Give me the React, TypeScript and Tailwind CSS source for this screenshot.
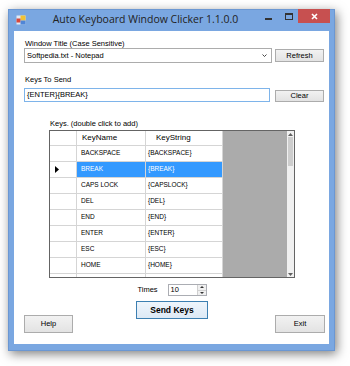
import React from "react";

const rows: [string, string][] = [
  ["BACKSPACE", "{BACKSPACE}"],
  ["BREAK", "{BREAK}"],
  ["CAPS LOCK", "{CAPSLOCK}"],
  ["DEL", "{DEL}"],
  ["END", "{END}"],
  ["ENTER", "{ENTER}"],
  ["ESC", "{ESC}"],
  ["HOME", "{HOME}"],
  ["", ""],
];

const font = { fontFamily: '"Liberation Sans", Arial, sans-serif' };

function WinButton({ label, className = "" }: { label: string; className?: string }) {
  return (
    <div
      className={`flex items-center justify-center border border-[#acacac] bg-gradient-to-b from-[#f2f2f2] to-[#e3e3e3] text-[7.5px] leading-none text-black ${className}`}
    >
      {label}
    </div>
  );
}

function AppIcon() {
  return (
    <svg width="10" height="10" viewBox="0 0 10 10">
      <rect x="0.5" y="0.5" width="9" height="9" fill="#dfe9f6" />
      <rect x="4.5" y="0.5" width="5" height="5" fill="#f2c233" />
      <rect x="0.5" y="3.5" width="4" height="4" fill="#d9473b" />
      <rect x="4.5" y="5.5" width="5" height="4" fill="#4f86d8" />
    </svg>
  );
}

function KeyGrid() {
  return (
    <div className="flex h-[148px] w-[246px] overflow-hidden border border-[#646464] bg-white">
      <div className="flex w-[173px] flex-col">
        <div className="flex h-[15px] shrink-0 border-b border-[#d5d5d5] text-[8px] leading-none">
          <div className="w-[27px] border-r border-[#d5d5d5]" />
          <div className="flex w-[69px] items-center border-r border-[#d5d5d5] pl-[5px]">KeyName</div>
          <div className="flex w-[77px] items-center border-r border-[#d5d5d5] pl-[10px]">KeyString</div>
        </div>
        {rows.map(([name, str], i) => {
          const sel = i === 1;
          return (
            <div key={i} className="flex h-[16px] shrink-0 border-b border-[#d5d5d5] text-[6.5px] leading-none">
              <div className="flex w-[27px] items-center border-r border-[#d5d5d5] pl-[5px]">
                {sel && (
                  <svg width="4" height="7" viewBox="0 0 4 7">
                    <path d="M0 0 L4 3.5 L0 7 Z" fill="#000" />
                  </svg>
                )}
              </div>
              <div
                className={`flex w-[69px] items-center border-r border-[#d5d5d5] pl-[4px] ${
                  sel ? "bg-[#3399ff] text-white" : "text-black"
                }`}
              >
                {name}
              </div>
              <div
                className={`flex w-[77px] items-center border-r border-[#d5d5d5] pl-[2px] ${
                  sel ? "bg-[#3399ff] text-white" : "text-black"
                }`}
              >
                {str}
              </div>
            </div>
          );
        })}
      </div>
      <div className="w-[64px] bg-[#ababab]" />
      <div className="flex w-[7px] flex-col bg-[#f0f0f0]">
        <div className="flex h-[6px] items-center justify-center">
          <svg width="5" height="3" viewBox="0 0 5 3">
            <path d="M0 3 L2.5 0 L5 3 Z" fill="#606060" />
          </svg>
        </div>
        <div className="mx-[1px] h-[29px] bg-[#cdcdcd]" />
        <div className="flex-1" />
        <div className="flex h-[6px] items-center justify-center">
          <svg width="5" height="3" viewBox="0 0 5 3">
            <path d="M0 0 L2.5 3 L5 0 Z" fill="#606060" />
          </svg>
        </div>
      </div>
    </div>
  );
}

export default function App() {
  return (
    <div className="h-[366px] w-[350px] overflow-hidden bg-white pl-[8px] pt-[9px]" style={font}>
      <div className="flex h-[342px] w-[327px] flex-col border border-[#6b97d2] bg-[#7aa7e1] shadow-[2px_3px_10px_rgba(0,0,0,0.5)]">
        {/* title bar */}
        <div className="flex h-[21px] shrink-0 items-start">
          <div className="ml-[7px] mt-[5px]">
            <AppIcon />
          </div>
          <div
            className="flex h-[20px] flex-1 items-center justify-center text-[10.5px] text-[#222]"
            style={{ fontFamily: '"Open Sans", "Noto Sans", sans-serif' }}
          >
            Auto Keyboard Window Clicker 1.1.0.0
          </div>
          <div className="mt-[8px] h-[2px] w-[7px] bg-[#333]" />
          <div className="ml-[13px] mt-[3px] h-[7px] w-[8px] border border-t-2 border-[#333]" />
          <div className="ml-[5px] flex h-[14px] w-[32px] items-center justify-center bg-[#c75050] mt-[-1px] mr-[4px]">
            <svg width="7" height="7" viewBox="0 0 7 7">
              <path d="M1 1 L6 6 M6 1 L1 6" stroke="#fff" strokeWidth="1.6" />
            </svg>
          </div>
        </div>

        {/* client area */}
        <div className="mx-[5px] mb-[6px] flex-1 bg-white pl-[10px] pr-[4px] text-[7.5px] leading-[8px] text-black">
          <div className="pl-[1px] pt-[9px]">Window Title (Case Sensitive)</div>
          <div className="flex items-start">
            <div className="flex h-[15px] w-[248px] items-center justify-between border border-[#acacac] pl-[2px] pr-[4px]">
              <span>Softpedia.txt - Notepad</span>
              <svg width="5" height="3" viewBox="0 0 5 3">
                <path d="M0.5 0.5 L2.5 2.5 L4.5 0.5" stroke="#333" strokeWidth="0.9" fill="none" />
              </svg>
            </div>
            <WinButton label="Refresh" className="ml-[3px] mt-[1px] h-[13px] w-[49px]" />
          </div>

          <div className="pl-[1px] pt-[13px]">Keys To Send</div>
          <div className="mt-[4px] flex items-start">
            <div className="flex h-[14px] w-[246px] items-center border border-[#7eb4ea] pl-[2px]">{"{ENTER}{BREAK}"}</div>
            <WinButton label="Clear" className="ml-[5px] mt-[2px] h-[12px] w-[49px]" />
          </div>

          <div className="pl-[26px] pt-[18px]">Keys. (double click to add)</div>
          <div className="ml-[25px] mt-[2px]">
            <KeyGrid />
          </div>

          <div className="flex">
            <WinButton label="Help" className="mt-[37px] h-[18px] w-[49px]" />
            <div className="flex flex-1 flex-col items-center pr-[4px] pt-[6px]">
              <div className="flex items-center">
                <span className="mr-[10px]">Times</span>
                <div className="flex h-[12px] w-[39px] items-center border border-[#abadb3]">
                  <span className="flex-1 pl-[2px]">10</span>
                  <div className="flex h-full w-[9px] flex-col border-l border-[#d0d0d0] bg-[#f0f0f0]">
                    <div className="flex flex-1 items-center justify-center border-b border-[#d0d0d0]">
                      <svg width="4" height="2" viewBox="0 0 4 2">
                        <path d="M0 2 L2 0 L4 2 Z" fill="#333" />
                      </svg>
                    </div>
                    <div className="flex flex-1 items-center justify-center">
                      <svg width="4" height="2" viewBox="0 0 4 2">
                        <path d="M0 0 L2 2 L4 0 Z" fill="#333" />
                      </svg>
                    </div>
                  </div>
                </div>
              </div>
              <div className="mt-[5px] flex h-[18px] w-[72px] items-center justify-center border border-[#3c7fb1] bg-gradient-to-b from-[#eef5fc] to-[#dde9f5] text-[8.5px] font-bold leading-none">
                Send Keys
              </div>
            </div>
            <WinButton label="Exit" className="mt-[37px] h-[18px] w-[50px]" />
          </div>
        </div>
      </div>
    </div>
  );
}
